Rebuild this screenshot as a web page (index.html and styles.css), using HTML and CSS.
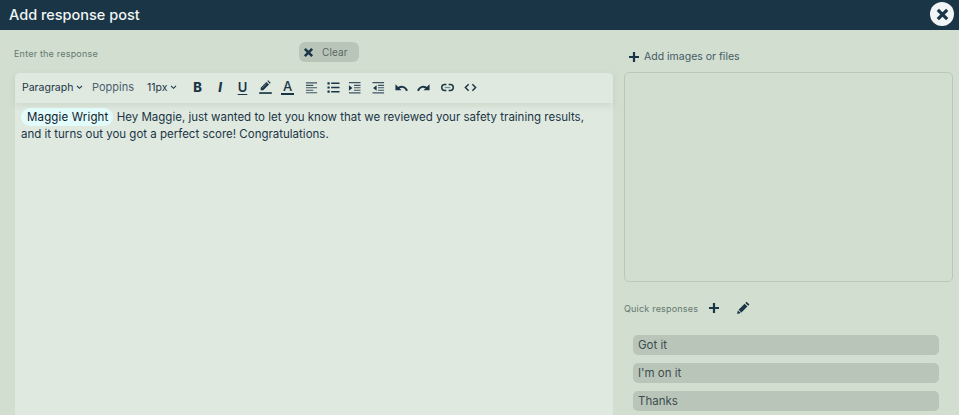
FILE: index.html
```html
<!DOCTYPE html>
<html lang="en">
<head>
<meta charset="utf-8">
<title>Add response post</title>
<link rel="stylesheet" href="styles.css">
</head>
<body>
<header class="titlebar">
  <h1 class="title">Add response post</h1>
  <button class="close" aria-label="Close"><svg viewBox="0 0 16 16" width="15" height="15"><path d="M3 3l10 10M13 3L3 13" class="s3"/></svg></button>
</header>
<main class="content">
  <section class="left">
    <div class="left-head">
      <span class="label">Enter the response</span>
      <button class="clear"><svg viewBox="0 0 12 12" width="11" height="11"><path d="M2 2l8 8M10 2l-8 8" class="s25"/></svg><span>Clear</span></button>
    </div>
    <div class="editor">
      <div class="toolbar">
        <span class="tb-select w-para">Paragraph<svg class="chev" viewBox="0 0 8 6" width="7" height="5"><path d="M1 1l3 3 3-3"/></svg></span>
        <span class="tb-font">Poppins</span>
        <span class="tb-select w-size">11px<svg class="chev" viewBox="0 0 8 6" width="7" height="5"><path d="M1 1l3 3 3-3"/></svg></span>
        <div class="tools">
          <b class="tool t-b">B</b>
          <i class="tool t-i">I</i>
          <span class="tool t-u">U</span>
          <svg class="ic ic-pen" viewBox="0 0 14 15"><path d="M1.800 11V8.200L8 2l2.800 2.800L4.600 11zM8.900 1.100l.9-.9 2.800 2.800-.9.900z" class="f"/><path d="M3.200 8.800l5-5" class="hl"/><path d="M.2 14h13.600" class="bar"/></svg>
          <span class="tool t-a">A</span>
          <svg class="ic mr-p" viewBox="0 0 14 14"><path d="M1 2h12M1 4.700h8M1 7.300h12M1 10h8M1 12.700h12" class="t"/></svg>
          <svg class="ic mr-n" viewBox="0 0 14 14"><path d="M4.500 2.500h9M4.500 7h9M4.500 11.500h9" class="l"/><path d="M.5 1.300h2.400v2.400H.5zM.5 5.800h2.400v2.400H.5zM.5 10.300h2.400v2.400H.5z" class="f"/></svg>
          <svg class="ic mr-n" viewBox="0 0 14 14"><path d="M1 1.800h12.500M6.500 4.700h7M6.500 7.300h7M6.500 10h7M1 12.800h12.500" class="t"/><path d="M1 4.500l3.800 3-3.800 3z" class="f"/></svg>
          <svg class="ic mr-p" viewBox="0 0 14 14"><path d="M.5 1.800h12.500M6.500 4.700H13M6.500 7.300H13M6.500 10H13M.5 12.800h12.500" class="t"/><path d="M5 4.500L1.200 7.500 5 10.500z" class="f"/></svg>
          <svg class="ic" viewBox="0 0 14 14"><path d="M.5 3.500v6.500h6.500z" class="f"/><path d="M2.800 8.200C6 5.200 10.800 5.400 13 10.500" class="h"/></svg>
          <svg class="ic" viewBox="0 0 14 14"><path d="M13.500 3.500v6.500H7z" class="f"/><path d="M11.200 8.200C8 5.200 3.200 5.400 1 10.500" class="h"/></svg>
          <svg class="ic mr-p" viewBox="0 0 14 14"><path d="M5.800 3.800H4a3.200 3.200 0 000 6.400h1.800M8.200 3.800H10a3.200 3.200 0 010 6.400H8.200" class="l"/><path d="M4 7h6" class="g"/></svg>
          <svg class="ic" viewBox="0 0 14 14"><path d="M5 3.500L1.500 7 5 10.500M9 3.500L12.500 7 9 10.500" class="l"/></svg>
        </div>
      </div>
      <div class="body">
        <p class="text"><span class="mention">Maggie Wright</span> <span>Hey Maggie, just wanted to let you know that we reviewed your safety training results,</span><br><span>and it turns out you got a perfect score! Congratulations.</span></p>
      </div>
    </div>
  </section>
  <aside class="right">
    <button class="add"><svg viewBox="0 0 12 12" width="12" height="12"><path d="M6 1v10M1 6h10" class="s2"/></svg><span>Add images or files</span></button>
    <div class="drop"></div>
    <div class="quick-head">
      <span class="label">Quick responses</span>
      <svg class="plus" viewBox="0 0 12 12" width="12" height="12"><path d="M6 1v10M1 6h10" class="s2"/></svg>
      <svg class="pen" viewBox="0 0 14 14" width="14" height="14"><path d="M1 13l.9-3.500 3 2.600zM2.600 8.700l6-6 2.800 2.800-6 6zM9.400 1.900l1.200-1.200 2.800 2.800-1.200 1.200z" class="pencil"/></svg>
    </div>
    <ul class="quick-list">
      <li class="quick">Got it</li>
      <li class="quick">I'm on it</li>
      <li class="quick">Thanks</li>
    </ul>
  </aside>
</main>
</body>
</html>
```
FILE: styles.css
```css
* { box-sizing: border-box; }
html, body { margin: 0; height: 100%; overflow: hidden; }
body { background: #d1ded0; color: #1a3546; font-family: "Inter", "Open Sans", sans-serif; display: flex; flex-direction: column; }
button { font: inherit; border: 0; padding: 0; background: none; color: inherit; }
svg { display: block; flex: none; }
.s3 { fill: none; stroke: #1a3546; stroke-width: 3.4; }
.s2 { fill: none; stroke: #1a3546; stroke-width: 2.2; }
.s25 { fill: none; stroke: #1a3546; stroke-width: 2.8; }
.pencil { fill: #1a3546; }

.titlebar { height: 30px; flex: none; background: #1a3546; display: flex; align-items: center; justify-content: space-between; padding: 0 5px 2px 9px; }
.title { margin: 0; font-size: 14.500px; font-weight: 500; color: #f2f6f5; }
.close { width: 24px; height: 24px; border-radius: 50%; background: #f1f5f6; display: flex; align-items: center; justify-content: center; }

.content { flex: 1; display: flex; min-height: 0; padding: 12px 6px 0 14px; gap: 11px; }
.left { width: 599px; flex: none; display: flex; flex-direction: column; }
.left-head { height: 31px; flex: none; display: flex; align-items: flex-start; }
.label { font-size: 9px; letter-spacing: .2px; color: #66786f; }
.left-head .label { width: 285px; padding-top: 6px; }
.clear { width: 60px; height: 20px; background: #bac5b9; border-radius: 6px; display: flex; align-items: center; gap: 8px; padding-left: 4px; font-size: 10px; letter-spacing: .1px; color: #57675f; }

.editor { flex: 1; margin-left: 1px; background: #e0e9e0; border-radius: 5px 5px 0 0; display: flex; flex-direction: column; }
.toolbar { height: 30px; flex: none; display: flex; align-items: center; padding: 0 0 2px 7px; box-shadow: 0 3px 6px rgba(120,135,120,.16); font-size: 10.500px; }
.tb-select { display: flex; align-items: center; gap: 3px; }
.w-para { width: 70px; }
.tb-font { width: 55px; color: #4c6271; font-size: 11px; }
.w-size { width: 44px; }
.chev { fill: none; stroke: #1a3546; stroke-width: 1.300; }
.tools { display: flex; align-items: center; gap: 9.500px; }
.tool { width: 13px; text-align: center; font-size: 13px; line-height: 14px; }
.t-b { font-weight: 800; }
.t-i { font-weight: 800; font-style: italic; }
.t-u { font-weight: 600; text-decoration: underline; text-underline-offset: 1.500px; }
.t-a { font-weight: 500; border-bottom: 2px solid #1a3546; line-height: 13px; height: 15px; margin-top: 1px; }
.ic { width: 13px; height: 13px; }
.ic-pen { height: 14px; }
.mr-p { margin-left: 1.500px; }
.mr-n { margin-left: -1px; }
.f { fill: #1a3546; }
.l { fill: none; stroke: #1a3546; stroke-width: 1.600; }
.t { fill: none; stroke: #3d5562; stroke-width: 1.200; }
.h { fill: none; stroke: #1a3546; stroke-width: 2.100; }
.g { fill: none; stroke: #7c8d8c; stroke-width: 1.400; }
.hl { fill: none; stroke: #8fa09f; stroke-width: .7; }
.bar { fill: none; stroke: #1a3546; stroke-width: 1.800; }

.body { padding: 6px 6px; flex: 1; }
.text { margin: 0; font-size: 11.500px; line-height: 17px; color: #1a3546; white-space: nowrap; }
.mention { background: #e2fbfb; border-radius: 9px; padding: 2px 5px 2px 6px; color: #10202c; letter-spacing: .15px; }

.right { flex: 1; min-width: 0; display: flex; flex-direction: column; }
.add { height: 29px; flex: none; display: flex; align-items: center; gap: 4px; padding-left: 4px; font-size: 10.500px; color: #455a66; }
.drop { height: 210px; flex: none; border: 1px solid #b9c9b9; border-radius: 5px; margin-top: 1px; }
.quick-head { height: 31px; margin-top: 10px; flex: none; display: flex; align-items: center; gap: 10px; }
.quick-head .label { padding-top: 2px; }
.pen { margin-left: 6px; }
.quick-list { list-style: none; margin: 12px 0 0; padding: 0 14px 0 9px; display: flex; flex-direction: column; gap: 8px; }
.quick { height: 20px; background: #bac5b9; border-radius: 5px; padding-left: 5px; font-size: 11.500px; line-height: 20px; color: #3b4d4f; }
```
